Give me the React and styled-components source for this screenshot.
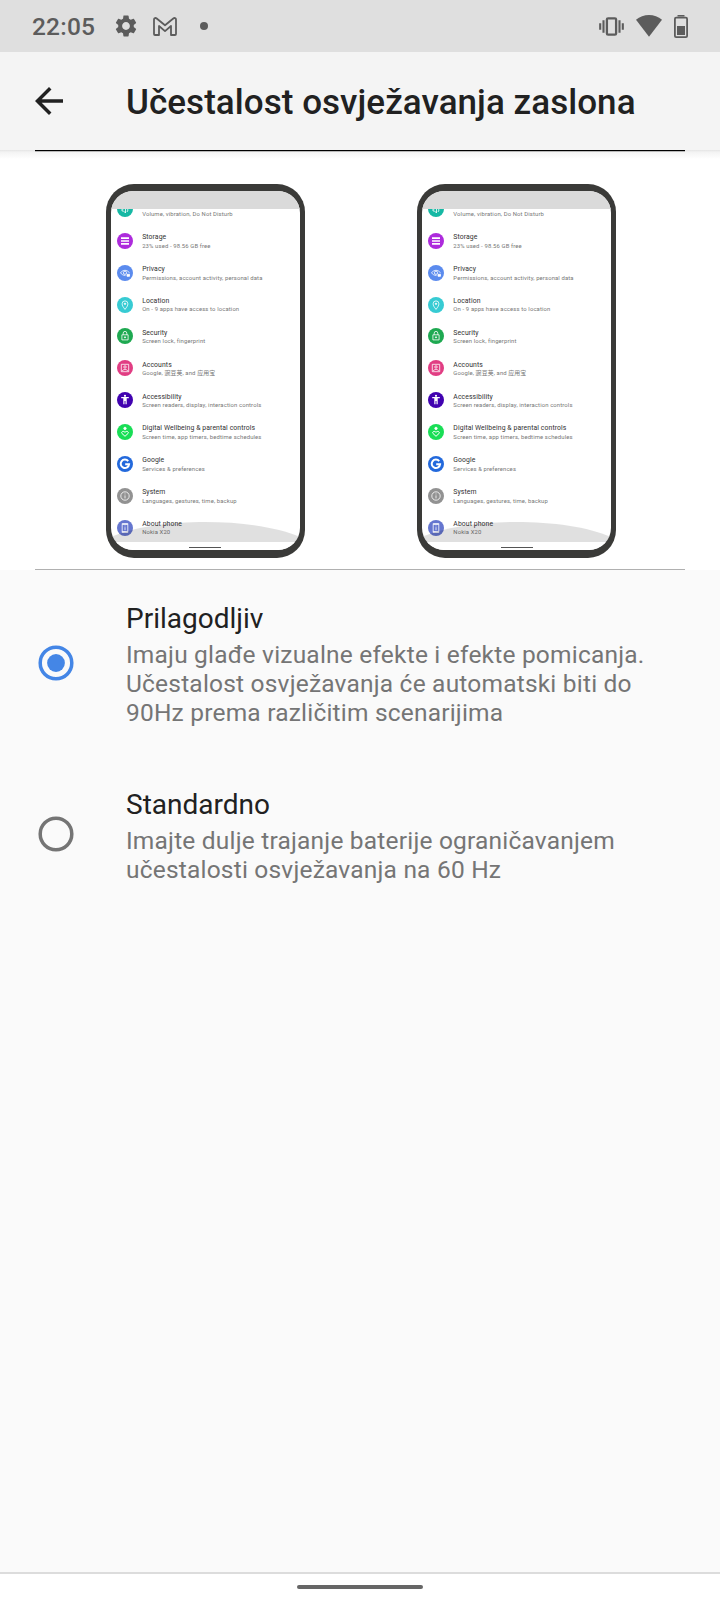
import React from "react";
import styled, { createGlobalStyle } from "styled-components";
import { MdSettings, MdArrowBack } from "react-icons/md";

const GlobalStyle = createGlobalStyle`
  * { box-sizing: border-box; }
  body { margin: 0; background: #fafafa; font-family: Roboto, "Noto Sans CJK SC", sans-serif; }
`;

const Screen = styled.main`
  width: 720px;
  height: 1600px;
  display: flex;
  flex-direction: column;
  background: #fafafa;
  overflow: hidden;
`;

const StatusBar = styled.div`
  height: 52px;
  flex: none;
  display: flex;
  align-items: center;
  justify-content: space-between;
  padding: 0 32px 0 32px;
  background: #dfdfdf;
  color: #5c5c5c;
  svg { display: block; }
`;

const StatusGroup = styled.div`
  display: flex;
  align-items: center;
  gap: ${(p) => p.$gap};
`;

const Clock = styled.span`
  font-size: 24.5px;
  font-weight: 500;
  line-height: 28px;
  letter-spacing: 0.2px;
  width: 66px;
  padding-top: 2px;
`;

const Dot = styled.span`
  width: 8px;
  height: 8px;
  margin-left: 8px;
  border-radius: 50%;
  background: currentColor;
`;

const AppBar = styled.header`
  height: 98px;
  flex: none;
  display: flex;
  align-items: center;
  padding-left: 28px;
  background: #f4f4f4;
  color: #212121;
  svg { display: block; }
`;

const Title = styled.h1`
  margin: 2px 0 0 56px;
  font-size: 35px;
  font-weight: 500;
  line-height: 41px;
  letter-spacing: 0.05px;
  white-space: nowrap;
`;

const Preview = styled.section`
  height: 420px;
  flex: none;
  padding: 0 35px;
  background: linear-gradient(#e4e4e4, #f3f3f3 2px, #fff 9px);
`;

const PreviewInner = styled.div`
  height: 100%;
  display: flex;
  gap: 111.7px;
  padding: 33px 0 0 70.7px;
  border-top: 1px solid #000;
  border-bottom: 1px solid #b0b0b0;
  box-shadow: inset 0 1px #b8b8b8;
`;

const Phone = styled.div`
  position: relative;
  width: 199.5px;
  height: 373.6px;
  flex: none;
  padding: 7px 5.3px 8px;
  border-radius: 28px;
  background: #3a3a38;
`;

const PhoneScreen = styled.div`
  position: relative;
  height: 100%;
  border-radius: 22px;
  overflow: hidden;
  background: #fff;
`;

const PhoneStatus = styled.div`
  position: relative;
  z-index: 1;
  height: 18px;
  background: #dadada;
`;

const SettingsList = styled.div`
  margin-top: -16px;
`;

const SettingRow = styled.div`
  height: 31.86px;
  display: flex;
  align-items: center;
  padding-left: 6.2px;
  gap: 9px;
`;

const Badge = styled.span`
  width: 16px;
  height: 16px;
  flex: none;
  border-radius: 50%;
  background: ${(p) => p.$color};
  svg { display: block; width: 16px; height: 16px; }
`;

const SettingText = styled.div`
  padding-top: 2px;
  white-space: nowrap;
  color: #303030;
  font-size: 6.85px;
  line-height: 8.4px;
  letter-spacing: 0.09px;
`;

const SettingNote = styled.div`
  color: #777;
  font-size: 5.9px;
  line-height: 8.6px;
  letter-spacing: 0.13px;
`;

const Ripple = styled.svg`
  position: absolute;
  left: 0;
  bottom: 8px;
  width: 100%;
  height: 20px;
`;

const PhoneNav = styled.div`
  position: absolute;
  left: 0;
  right: 0;
  bottom: 0;
  height: 8px;
  display: flex;
  justify-content: center;
  padding-top: 5px;
  background: #fff;
  &::before { content: ""; width: 32px; height: 1px; background: #555; }
`;

const Options = styled.section`
  flex: 1;
  padding-top: 32px;
`;

const OptionRow = styled.div`
  display: flex;
  align-items: flex-start;
  padding-left: 38px;
  margin-bottom: 61px;
`;

const Radio = styled.span`
  width: 36px;
  height: 36px;
  flex: none;
  margin: ${(p) => p.$top}px 52px 0 0;
  display: flex;
  align-items: center;
  justify-content: center;
  color: ${(p) => (p.$checked ? "#4486e6" : "#757575")};
  svg { display: block; }
`;

const OptionTitle = styled.div`
  font-size: 28px;
  line-height: 33px;
  color: #212121;
`;

const OptionNote = styled.div`
  margin-top: 5px;
  font-size: 24.5px;
  line-height: 29px;
  letter-spacing: 0.2px;
  color: #757575;
  white-space: nowrap;
`;

const NavBar = styled.footer`
  height: 28px;
  flex: none;
  display: flex;
  justify-content: center;
  padding-top: 11px;
  border-top: 2px solid #dcdcdc;
  background: #fff;
`;

const NavHandle = styled.span`
  width: 126px;
  height: 4px;
  border-radius: 2px;
  background: #666;
`;

const RadioMark = ({ checked }) => (
  <svg width="36" height="36" viewBox="0 0 36 36" fill="none">
    <circle cx="18" cy="18" r="15.8" stroke="currentColor" strokeWidth="3.5" />
    {checked && <circle cx="18" cy="18" r="8.9" fill="currentColor" />}
  </svg>
);

const GmailIcon = () => (
  <svg width="24" height="19" viewBox="0 0 24 19" fill="none" stroke="currentColor" strokeWidth="1.8" strokeLinejoin="round">
    <path d="M1 2.4C1 1 2.6.6 3.7 1.5L12 8.2l8.3-6.7c1.1-.9 2.7-.5 2.7.9V17c0 .6-.4 1-1 1h-4V9l-6 5.1L6 9v9H2c-.6 0-1-.4-1-1z" />
  </svg>
);

const VibrateIcon = () => (
  <svg width="25" height="19" viewBox="0 0 25 19" fill="none" stroke="currentColor">
    <rect x="7.9" y="1.3" width="9.2" height="16.4" rx="1.2" strokeWidth="2.3" />
    <path d="M4.5 3.2v12.6M20.5 3.2v12.6M1.2 6.2v6.6M23.8 6.2v6.6" strokeWidth="2.1" />
  </svg>
);

const WifiIcon = () => (
  <svg width="26" height="22" viewBox="0 0 26 22" fill="currentColor">
    <path d="M0 4.8C7.2-1.6 18.8-1.6 26 4.8L13 21.7z" />
  </svg>
);

const BatteryIcon = () => (
  <svg width="14" height="23" viewBox="0 0 14 23" fill="none">
    <path d="M3.5.8h7" stroke="currentColor" strokeWidth="1.6" />
    <rect x=".9" y="2.7" width="12.2" height="19.4" rx="1.2" stroke="currentColor" strokeWidth="1.8" />
    <path d="M3 11h8v9H3z" fill="currentColor" />
  </svg>
);

const glyphs = {
  sound: <path d="M5 8h1.5L8.5 6v6l-2-2H5zM10 7q2 2 0 4" />,
  storage: <path d="M4 5.2h8M4 8h8M4 10.8h8" strokeWidth="1.7" />,
  privacy: (
    <>
      <path d="M3.4 7.8Q8 2.7 12.6 7.8M3.4 7.8Q5.5 10.5 8.5 10.6" />
      <circle cx="8" cy="7.8" r="1.6" />
      <path d="M10 9.3h2.5v2H10z" fill="#fff" />
    </>
  ),
  location: (
    <>
      <path d="M8 12.4C6.2 10 5.1 8.6 5.1 6.8a2.9 2.9 0 0 1 5.8 0c0 1.8-1.1 3.2-2.9 5.6z" />
      <circle cx="8" cy="6.8" r=".7" fill="#fff" />
    </>
  ),
  security: (
    <>
      <path d="M4.9 6.8h6.2v5.1H4.9zM6.2 6.8V5.2a1.8 1.8 0 0 1 3.6 0v1.6" />
      <circle cx="8" cy="9.3" r=".6" fill="#fff" />
    </>
  ),
  accounts: (
    <>
      <path d="M4.3 4.3h7.4v7.4H4.3zM5 11c1.5-2 4.5-2 6 0" />
      <circle cx="8" cy="7" r="1.2" />
    </>
  ),
  accessibility: (
    <>
      <circle cx="8" cy="3.8" r="1.1" fill="#fff" stroke="none" />
      <path d="M4.2 5.7h7.6M8 5.8v3.2M6.9 6v6.3M9.1 6v6.3" strokeWidth="1.2" />
    </>
  ),
  wellbeing: (
    <>
      <circle cx="8" cy="4.4" r="1.2" fill="#fff" />
      <path d="M8 12.3 4.9 9.4C3.9 7.6 6.5 6.4 8 8.4c1.5-2 4.1-.8 3.1 1z" strokeWidth="1" />
    </>
  ),
  google: <path d="M11.2 5.2A4.2 4.2 0 1 0 12.1 8.2H8.2" strokeWidth="2" />,
  system: (
    <>
      <circle cx="8" cy="8" r="4.2" />
      <path d="M8 7.4v3M8 5.5v.9" />
    </>
  ),
  about: (
    <>
      <path d="M5.2 3.5h5.6v9H5.2zM5.2 4.5h5.6M5.2 11.5h5.6" />
      <path d="M8 7.2v3M8 5.6v.8" />
    </>
  ),
};

const settings = [
  { icon: "sound", color: "#16b8a4", title: "Sound", note: "Volume, vibration, Do Not Disturb" },
  { icon: "storage", color: "#ad2bdc", title: "Storage", note: "23% used - 98.56 GB free" },
  { icon: "privacy", color: "#5b8bee", title: "Privacy", note: "Permissions, account activity, personal data" },
  { icon: "location", color: "#37cbd3", title: "Location", note: "On - 9 apps have access to location" },
  { icon: "security", color: "#1ea951", title: "Security", note: "Screen lock, fingerprint" },
  { icon: "accounts", color: "#e13d83", title: "Accounts", note: "Google, 豌豆荚, and 应用宝" },
  { icon: "accessibility", color: "#4102b0", title: "Accessibility", note: "Screen readers, display, interaction controls" },
  { icon: "wellbeing", color: "#19de56", title: "Digital Wellbeing & parental controls", note: "Screen time, app timers, bedtime schedules" },
  { icon: "google", color: "#2369dc", title: "Google", note: "Services & preferences" },
  { icon: "system", color: "#929292", title: "System", note: "Languages, gestures, time, backup" },
  { icon: "about", color: "#6576cf", title: "About phone", note: "Nokia X20" },
];

const PhonePreview = () => (
  <Phone>
    <PhoneScreen>
      <PhoneStatus />
      <SettingsList>
        {settings.map((s) => (
          <SettingRow key={s.icon}>
            <Badge $color={s.color}>
              <svg viewBox="0 0 16 16" fill="none" stroke="#fff" strokeWidth=".8">{glyphs[s.icon]}</svg>
            </Badge>
            <SettingText>
              {s.title}
              <SettingNote>{s.note}</SettingNote>
            </SettingText>
          </SettingRow>
        ))}
      </SettingsList>
      <Ripple viewBox="0 0 190 20" preserveAspectRatio="none">
        <path d="M0 15C45-5 145-5 190 15V20H0z" fill="#000" fillOpacity=".12" />
      </Ripple>
      <PhoneNav />
    </PhoneScreen>
  </Phone>
);

export default function App() {
  return (
    <>
      <GlobalStyle />
      <Screen>
        <StatusBar>
          <StatusGroup $gap="14.7px">
            <Clock>22:05</Clock>
            <MdSettings size={26} />
            <GmailIcon />
            <Dot />
          </StatusGroup>
          <StatusGroup $gap="11.8px">
            <VibrateIcon />
            <WifiIcon />
            <BatteryIcon />
          </StatusGroup>
        </StatusBar>
        <AppBar>
          <MdArrowBack size={42} />
          <Title>Učestalost osvježavanja zaslona</Title>
        </AppBar>
        <Preview>
          <PreviewInner>
            <PhonePreview />
            <PhonePreview />
          </PreviewInner>
        </Preview>
        <Options>
          <OptionRow>
            <Radio $checked $top={43}>
              <RadioMark checked />
            </Radio>
            <div>
              <OptionTitle>Prilagodljiv</OptionTitle>
              <OptionNote>
                Imaju glađe vizualne efekte i efekte pomicanja.
                <br />
                Učestalost osvježavanja će automatski biti do
                <br />
                90Hz prema različitim scenarijima
              </OptionNote>
            </div>
          </OptionRow>
          <OptionRow>
            <Radio $top={28}>
              <RadioMark />
            </Radio>
            <div>
              <OptionTitle>Standardno</OptionTitle>
              <OptionNote>
                Imajte dulje trajanje baterije ograničavanjem
                <br />
                učestalosti osvježavanja na 60 Hz
              </OptionNote>
            </div>
          </OptionRow>
        </Options>
        <NavBar>
          <NavHandle />
        </NavBar>
      </Screen>
    </>
  );
}
